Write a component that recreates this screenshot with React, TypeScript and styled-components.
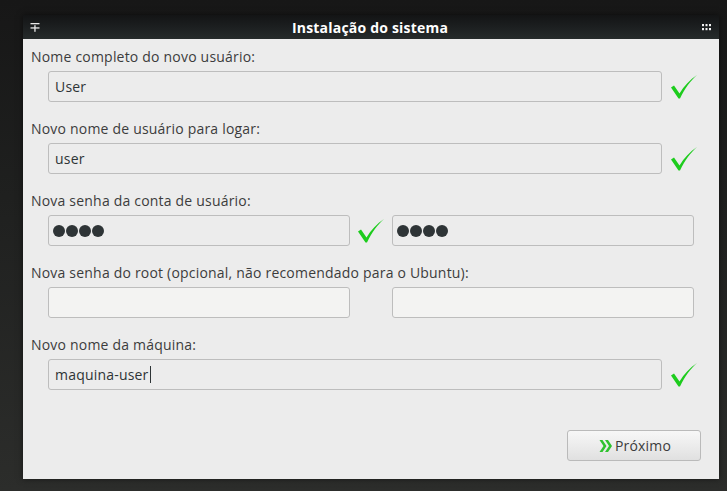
import React from "react";
import styled, { createGlobalStyle } from "styled-components";

const Global = createGlobalStyle`
  html, body { margin: 0; padding: 0; }
  body {
    width: 727px;
    height: 491px;
    overflow: hidden;
    background: linear-gradient(180deg, #171717 0%, #1f201f 40%, #2c2d2b 100%);
    font-family: "Open Sans", "Noto Sans", "DejaVu Sans", sans-serif;
  }
`;

const Desktop = styled.div`
  width: 727px;
  height: 491px;
  padding: 15px 0 0 23px;
  box-sizing: border-box;
`;

const Window = styled.div`
  width: 696px;
  display: flex;
  flex-direction: column;
  box-shadow: 0 0 6px rgba(0, 0, 0, 0.5);
`;

const TitleBar = styled.div`
  height: 24px;
  display: flex;
  align-items: center;
  justify-content: space-between;
  padding: 0 8px 0 7px;
  background: linear-gradient(180deg, #131415 0%, #1c1f20 50%, #262b2b 100%);
  color: #ffffff;
`;

const Title = styled.div`
  font-family: "Open Sans", "Noto Sans", sans-serif;
  font-weight: 700;
  font-size: 14px;
  letter-spacing: 0.2px;
  padding-right: 2px;
`;

const Body = styled.div`
  height: 440px;
  background: #ececec;
  box-sizing: border-box;
  padding: 8px 8px 18px 8px;
  display: flex;
  flex-direction: column;
`;

const Section = styled.div`
  display: flex;
  flex-direction: column;
  gap: 5px;
  margin-bottom: 17px;
`;

const Label = styled.div`
  font-size: 14px;
  line-height: 19px;
  color: #3c3c3c;
  letter-spacing: 0.2px;
`;

const FieldRow = styled.div`
  display: flex;
  align-items: center;
  padding-left: 17px;
`;

const Input = styled.div<{ $w: number; $empty?: boolean }>`
  width: ${(p) => p.$w}px;
  flex: none;
  height: 31px;
  box-sizing: border-box;
  border: 1px solid #bdbdbd;
  border-radius: 3px;
  background: ${(p) => (p.$empty ? "#f3f3f2" : "#ececec")};
  display: flex;
  align-items: center;
  padding-left: 6px;
  font-size: 14px;
  color: #2e3436;
  letter-spacing: 0.2px;
`;

const CheckSlot = styled.div<{ $w: number }>`
  width: ${(p) => p.$w}px;
  flex: none;
  height: 31px;
  display: flex;
  align-items: center;
  justify-content: center;
`;

const Spacer = styled.div<{ $w: number }>`
  width: ${(p) => p.$w}px;
  flex: none;
`;

const Dots = styled.div`
  display: flex;
  gap: 1px;
  margin-left: -2px;
`;

const Dot = styled.span`
  width: 12px;
  height: 12px;
  border-radius: 50%;
  background: #2e3436;
`;

const Caret = styled.span`
  display: inline-block;
  width: 1px;
  height: 17px;
  background: #2e3436;
  margin-left: 1px;
`;

const Footer = styled.div`
  margin-top: auto;
  display: flex;
  justify-content: flex-end;
  padding-right: 10px;
`;

const Button = styled.button`
  width: 134px;
  height: 31px;
  border: 1px solid #bababa;
  border-radius: 3px;
  background: linear-gradient(180deg, #f7f7f7 0%, #ececec 50%, #e0e0e0 100%);
  display: flex;
  align-items: center;
  justify-content: center;
  gap: 2px;
  font-family: "Open Sans", "Noto Sans", sans-serif;
  font-size: 14px;
  letter-spacing: 0.2px;
  color: #3c3c3c;
  padding: 0 0 0 2px;
`;

const Check = () => (
  <svg width="28" height="26" viewBox="0 0 28 26">
    <path
      d="M1 13.5 L4 11.5 L9.5 19.5 C14 12 20 5.5 27 1 C20.5 7 15 14 10 24.5 L8.5 24.5 Z"
      fill="#1dcc1d"
    />
  </svg>
);

const Chevrons = () => (
  <svg width="14" height="14" viewBox="0 0 14 14">
    <path d="M0.5 1 L3.5 1 L7.5 7 L3.5 13 L0.5 13 L4.5 7 Z" fill="#2fc22f" />
    <path d="M6 1 L9 1 L13 7 L9 13 L6 13 L10 7 Z" fill="#2fc22f" />
  </svg>
);

const PinIcon = () => (
  <svg width="10" height="10" viewBox="0 0 10 10">
    <rect x="0.5" y="1" width="9" height="1.3" fill="#e8e8e8" />
    <rect x="0.5" y="5.3" width="9" height="1.3" fill="#e8e8e8" />
    <rect x="4.3" y="3.2" width="1.3" height="6.6" fill="#e8e8e8" />
  </svg>
);

const MenuIcon = () => (
  <svg width="9" height="7" viewBox="0 0 9 7">
    {[0, 3.5, 7].map((x) =>
      [0, 4].map((y) => (
        <rect key={`${x}-${y}`} x={x} y={y} width="2" height="2.2" fill="#f2f2f2" />
      ))
    )}
  </svg>
);

const Passwd = () => (
  <Dots>
    <Dot />
    <Dot />
    <Dot />
    <Dot />
  </Dots>
);

export default function App() {
  return (
    <>
      <Global />
      <Desktop>
        <Window>
          <TitleBar>
            <PinIcon />
            <Title>Instalação do sistema</Title>
            <MenuIcon />
          </TitleBar>
          <Body>
            <Section>
              <Label>Nome completo do novo usuário:</Label>
              <FieldRow>
                <Input $w={614}>User</Input>
                <CheckSlot $w={43}>
                  <Check />
                </CheckSlot>
              </FieldRow>
            </Section>
            <Section>
              <Label>Novo nome de usuário para logar:</Label>
              <FieldRow>
                <Input $w={614}>user</Input>
                <CheckSlot $w={43}>
                  <Check />
                </CheckSlot>
              </FieldRow>
            </Section>
            <Section>
              <Label>Nova senha da conta de usuário:</Label>
              <FieldRow>
                <Input $w={302}>
                  <Passwd />
                </Input>
                <CheckSlot $w={42}>
                  <Check />
                </CheckSlot>
                <Input $w={302}>
                  <Passwd />
                </Input>
              </FieldRow>
            </Section>
            <Section>
              <Label>Nova senha do root (opcional, não recomendado para o Ubuntu):</Label>
              <FieldRow>
                <Input $w={302} $empty />
                <Spacer $w={42} />
                <Input $w={302} $empty />
              </FieldRow>
            </Section>
            <Section>
              <Label>Novo nome da máquina:</Label>
              <FieldRow>
                <Input $w={614}>
                  maquina-user
                  <Caret />
                </Input>
                <CheckSlot $w={43}>
                  <Check />
                </CheckSlot>
              </FieldRow>
            </Section>
            <Footer>
              <Button>
                <Chevrons />
                Próximo
              </Button>
            </Footer>
          </Body>
        </Window>
      </Desktop>
    </>
  );
}
